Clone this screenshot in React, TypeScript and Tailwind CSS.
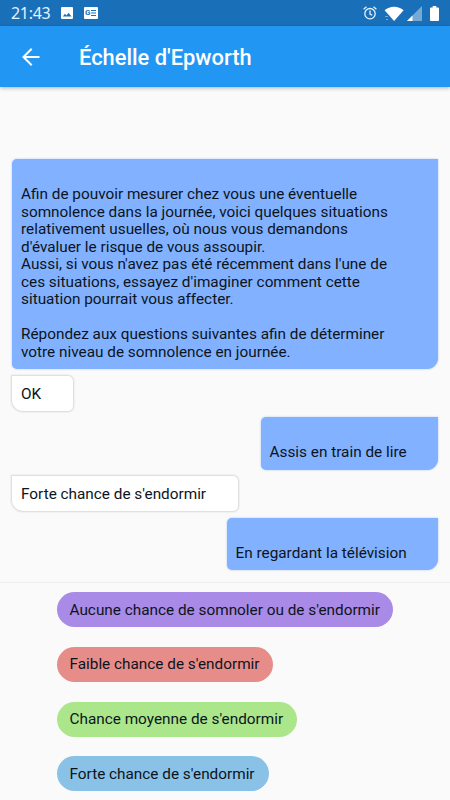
import React from "react";
import clsx from "clsx";

type Message = {
  from: "bot" | "user";
  lines: string[];
  className: string;
};

const MESSAGES: Message[] = [
  {
    from: "bot",
    lines: [
      "Afin de pouvoir mesurer chez vous une éventuelle",
      "somnolence dans la journée, voici quelques situations",
      "relativement usuelles, où nous vous demandons",
      "d'évaluer le risque de vous assoupir.",
      "Aussi, si vous n'avez pas été récemment dans l'une de",
      "ces situations, essayez d'imaginer comment cette",
      "situation pourrait vous affecter.",
      "",
      "Répondez aux questions suivantes afin de déterminer",
      "votre niveau de somnolence en journée.",
    ],
    className: "w-[426px] mb-[7px]",
  },
  { from: "user", lines: ["OK"], className: "w-[60.5px] mb-[6px]" },
  { from: "bot", lines: ["Assis en train de lire"], className: "w-[177.5px] mb-[6.5px]" },
  { from: "user", lines: ["Forte chance de s'endormir"], className: "w-[225.5px] mb-[6.5px]" },
  { from: "bot", lines: ["En regardant la télévision"], className: "w-[211.5px]" },
];

const ANSWERS = [
  { label: "Aucune chance de somnoler ou de s'endormir", className: "w-[336.5px] bg-[#a98ae6]" },
  { label: "Faible chance de s'endormir", className: "w-[216.5px] bg-[#e68d8a]" },
  { label: "Chance moyenne de s'endormir", className: "w-[240.5px] bg-[#abe68a]" },
  { label: "Forte chance de s'endormir", className: "w-[212px] bg-[#8ac1e6]" },
];

const StatusBar = () => (
  <div className="flex h-[26px] shrink-0 items-center bg-[#1a70b8] pl-[11px] pr-[11px] text-white">
    <span className="w-[40px] whitespace-nowrap text-[16px] leading-none tracking-[-0.3px] font-['Noto_Sans'] text-[#e3f3ff]">
      21:43
    </span>
    <svg className="ml-[10px]" width="12" height="12" viewBox="0 0 12 12">
      <path
        fill="#fff"
        fillRule="evenodd"
        d="M1 0h10a1 1 0 0 1 1 1v10a1 1 0 0 1-1 1H1a1 1 0 0 1-1-1V1a1 1 0 0 1 1-1ZM1.8 9.5h8.7L7.6 5.8 5.5 8.4 4 6.8Z"
      />
    </svg>
    <div className="relative ml-[11px] flex h-[12px] w-[14px] items-center rounded-[1px] bg-white pl-[1px]">
      <span className="text-[8px] font-bold leading-none text-[#1a70b8]">G</span>
      <svg className="ml-[1px]" width="5" height="6" viewBox="0 0 5 6">
        <path stroke="#1a70b8" d="M0 .5h5M0 3h5M0 5.5h5" />
      </svg>
    </div>
    <div className="flex-1" />
    <svg width="14" height="14" viewBox="0 0 14 14" fill="none" stroke="#e3f3ff" strokeWidth="1.3">
      <circle cx="7" cy="7.7" r="5.2" />
      <path d="M7 4.5V8l2.3 1.3M.6 3.2 3.5.8M13.4 3.2 10.5.8" />
    </svg>
    <svg className="ml-[7px]" width="20" height="15" viewBox="0 0 20 15">
      <path fill="#fff" d="M.6 4.3C5.8-.5 14.4-.5 19.6 4.3L10.1 15Z" />
      <path stroke="#72a9d5" d="M1 10.5h3M2 13.5h2" />
    </svg>
    <svg className="ml-[3px]" width="15" height="15" viewBox="0 0 15 15">
      <path fill="#76a9d4" d="M15 0v15H0Z" />
      <path fill="#fff" d="M5.5 9.5V15H0Z" />
    </svg>
    <svg className="ml-[8px]" width="9" height="15" viewBox="0 0 9 15">
      <path
        fill="#fff"
        d="M2.7 0h3.6v1.5H8a1 1 0 0 1 1 1V14a1 1 0 0 1-1 1H1a1 1 0 0 1-1-1V2.5a1 1 0 0 1 1-1h1.7Z"
      />
    </svg>
  </div>
);

const Header = () => (
  <header className="z-10 flex h-[61px] shrink-0 items-center bg-[#2196f3] pl-[22px] text-white shadow-[0_1px_4px_rgba(0,0,0,0.3)]">
    <svg width="18" height="18" viewBox="0 0 18 18" fill="none" stroke="currentColor" strokeWidth="2">
      <path d="M17.5 9H1.5M9.7.8 1.5 9l8.2 8.2" />
    </svg>
    <h1 className="ml-[39px] whitespace-nowrap pt-[2px] text-[21.87px] font-medium leading-none">
      Échelle d'Epworth
    </h1>
  </header>
);

const Bubble: React.FC<{ message: Message }> = ({ message }) => {
  const isBot = message.from === "bot";
  return (
    <div
      className={clsx(
        "shrink-0 whitespace-nowrap pb-[8px] pl-[9px] pt-[9.5px]",
        isBot
          ? "self-end rounded-[5px] rounded-tr-none rounded-br-[11px] bg-[#82b1ff] shadow-[0_0_2px_rgba(80,145,225,0.5)]"
          : "self-start rounded-[5px] rounded-tl-none rounded-bl-[11px] bg-white shadow-[0_0_2px_1px_rgba(0,0,0,0.14)]",
        message.className
      )}
    >
      {isBot && <div className="h-[17.5px]" />}
      {message.lines.map((line, i) => (
        <p key={i} className="h-[17.5px] leading-[17.5px]">
          {line}
        </p>
      ))}
    </div>
  );
};

const App = () => (
  <div className="flex h-[800px] w-[450px] flex-col overflow-hidden bg-[#fafafa] font-[Roboto,sans-serif] text-[15.33px] text-[#0c1420]">
    <StatusBar />
    <Header />
    <main className="flex h-[495px] shrink-0 flex-col pl-[12px] pr-[12px] pt-[72px]">
      {MESSAGES.map((message) => (
        <Bubble key={message.lines[0]} message={message} />
      ))}
    </main>
    <div className="flex flex-col items-start gap-[19.7px] border-t border-[#eeeeee] pl-[56.5px] pt-[9.3px]">
      {ANSWERS.map(({ label, className }) => (
        <button
          key={label}
          className={clsx("h-[35px] whitespace-nowrap rounded-full pl-[13px] pt-px text-left", className)}
        >
          {label}
        </button>
      ))}
    </div>
  </div>
);

export default App;
